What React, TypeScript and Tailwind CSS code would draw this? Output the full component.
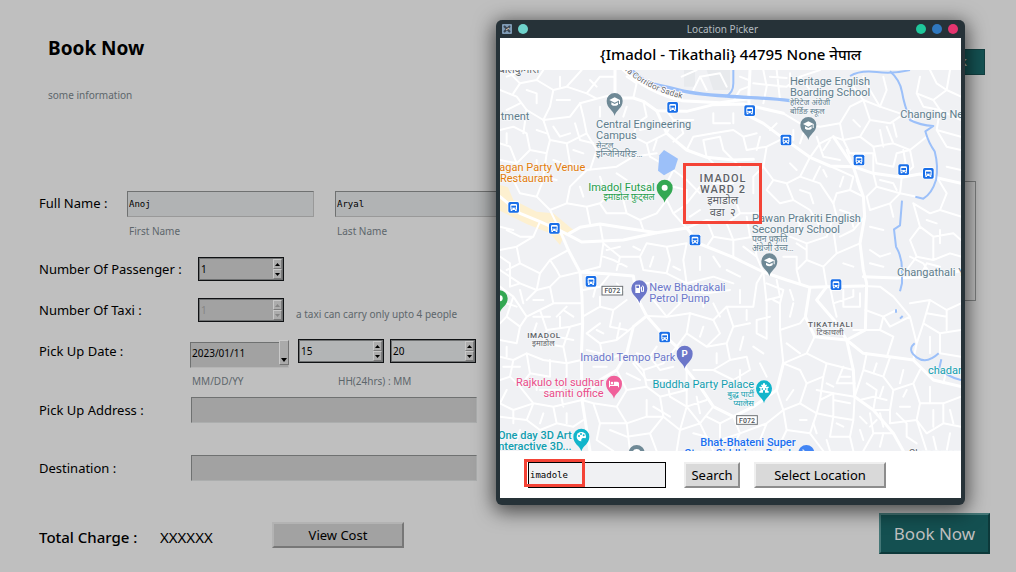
import React from "react";

const SANS = "font-['Noto_Sans','Noto_Sans_Devanagari',sans-serif]";
const MONO = "font-['DejaVu_Sans_Mono',monospace]";

const MAJOR_ROADS = [
  "M345 0V72L355 84H400L430 94L470 122L560 124L640 104L730 102L850 130",
  "M370 0Q440 66 545 92L660 98L760 84",
  "M750 0L746 84L750 140L790 160L850 205L930 262L990 288L1060 290L1120 310L1205 322L1260 312L1383 340",
  "M0 380L60 430L120 455L180 482L215 500L245 516L370 510L470 488L560 474L600 522L700 562L790 606L860 630L930 652L980 650L1090 648",
  "M180 482L205 540L240 606L246 680L248 760L244 860L246 990L270 1143",
  "M208 490L240 472L300 462L400 478L470 488",
  "M240 606L330 612L400 618L410 680L440 738L480 784L530 830L560 900L600 950L640 1010L700 1040L760 1010L830 960L850 880",
  "M440 738L400 770L380 850L350 900L300 930L246 990",
  "M980 650L950 690L1010 760L1040 810L1090 850L1180 862L1240 870L1300 930L1383 950",
  "M1040 810L1060 900L1064 980L1120 1020L1180 1090L1210 1143",
  "M930 652L916 740L944 800L1040 810",
  "M1094 440L1080 520L1090 600L1100 640L1096 780L1040 810",
  "M1000 200L1060 290L1090 380L1094 440",
  "M1090 620L1190 624L1280 620L1383 602",
  "M470 122L500 190L560 240L620 262L700 270L760 268",
];

const MINOR_ROADS = [
  "M0 60L50 80L80 120L130 150L210 140L240 100L290 86L345 72M20 0L60 40L110 30L160 60L200 50L245 0M110 30L130 0M160 60L150 110L130 150M200 50L260 70L300 20L345 20M260 70L290 86M60 40L40 70",
  "M0 180L40 170L80 190L90 240L140 250L130 320L170 330M80 120L70 190M130 150L150 210L200 220L260 190L250 140L240 100M150 210L140 250M200 220L210 280L260 300L350 290L400 260L470 250M260 190L290 240L270 300",
  "M0 220L30 230L50 280L0 270M50 280L90 240M20 120L60 100M30 150L0 140M110 180L140 190M160 170L180 200L210 190M225 160L240 210L280 220",
  "M400 84L410 40L380 20M430 94L440 140L410 160L400 200L440 220L500 190M440 220L450 260L520 300L560 330M500 190L520 150L500 122M520 150L580 150M560 240L580 200L640 190M620 262L610 210L660 200M520 215L550 190L540 160",
  "M545 20L590 0M580 60L600 20L660 10L680 50M600 20L620 60M700 94L720 60L746 50M720 20L746 30M760 40L860 50L900 20L960 0M790 0L800 50L790 100M830 0L840 90M870 50L870 10M810 20L860 24M900 20L930 60",
  "M640 190L700 180L730 200L770 190M660 200L670 240L700 270M730 200L740 240L800 230L850 205M800 230L790 290L820 330L860 340L900 320L930 262M820 330L800 360L840 400L880 390L930 420L960 470M860 340L880 390M900 320L960 340L1000 400L1010 440",
  "M850 130L900 160L960 170L1020 160L1050 110L1090 90L1140 110L1160 60L1150 20M1020 160L1030 210L1080 200L1110 150L1090 90M1080 200L1120 230L1180 220L1230 240L1280 200M1110 150L1170 160L1200 140M1030 210L1050 250L1120 250L1120 310M930 262L960 220L1000 200L1030 210",
  "M1090 20L1110 60L1140 110L1200 130M1060 50L1090 90M1180 220L1160 170M1120 230L1130 280L1180 290L1190 250L1230 240L1240 290L1205 322M1140 180L1150 230M1060 150L1080 170M970 240L990 210M950 200L970 260L1020 270",
  "M1205 322L1200 370L1170 400L1180 440M1120 310L1130 350L1100 380L1110 420L1170 400M1130 350L1200 370L1250 380M1090 380L1050 360L1010 370L1000 400M1050 360L1060 320L990 288M1060 290L1040 240",
  "M1260 20L1250 70L1300 90L1340 60L1383 80M1250 70L1270 110L1320 120L1383 150M1300 90L1320 120L1310 180L1383 200M1290 0L1310 40L1340 60L1350 0M1230 120L1240 150M1310 180L1340 230L1383 240M1310 320L1340 370L1320 420L1383 440M1340 290L1383 300",
  "M1240 400L1290 430L1320 420M1240 400L1260 470L1300 500L1360 490L1383 510M1260 470L1230 510L1250 560L1300 570L1300 500M1250 560L1220 600M1300 570L1350 550L1383 560M1260 620L1280 580L1320 590M1280 450L1310 460M1320 480L1320 520M1230 560L1270 580L1290 610",
  "M0 320L40 330L60 370L110 380L150 420L180 482M110 380L130 330M150 420L200 400L260 410L300 400L340 360M200 400L210 350L260 300M260 410L270 460M300 400L320 430L380 430L420 450L470 430L500 390M380 430L370 390L420 380L440 340M420 450L430 480",
  "M520 300L500 340M500 390L520 430L560 474M520 430L550 410M560 474L620 450L680 460L720 430L780 430M620 450L640 500L700 510L760 500M680 460L700 510L700 562M740 440L750 500M640 500L620 530M720 430L710 400M790 606L770 560L730 530M760 500L770 560",
  "M0 540L50 530L100 500L120 455M50 530L60 580L120 610L150 570L205 540M0 600L60 640L110 660L150 650L180 620L240 606M60 580L20 600M120 610L110 660M150 570L170 600L180 620M20 480L60 500L100 500M0 470L40 480M0 560L30 580L30 650L60 640M150 650L160 700L246 700",
  "M0 650L40 680L80 740L120 720L160 700M40 680L20 740L60 770L80 740M120 720L140 780L210 770L248 760M140 780L130 820L190 830L210 770M60 770L50 820L0 810M20 740L0 760M80 690L110 660M100 740L150 740M170 740L200 710M190 720L220 740M170 800L220 810M190 830L200 880L244 870",
  "M0 860L40 870L80 850L130 870L200 880M40 870L30 920L0 930M80 850L90 910L150 920L150 870M90 910L60 950L100 1000L160 1010L246 990M30 920L60 950M100 1000L80 1050L0 1040M160 1010L170 1060L220 1070L250 1050M80 1050L120 1080L170 1060M20 960L0 1000L40 1020L100 1000M40 1020L40 1060M120 960L180 960L200 920L200 880M180 960L190 1010",
  "M300 462L310 520L300 590L240 606M310 520L360 560L420 560L440 520L500 530L560 520M360 560L350 600M420 560L430 600L500 610L560 640L640 620L700 640M500 530L510 570L500 610M560 520L550 570L560 640M310 560L340 570L380 590M320 540L360 530M400 530L420 540M460 560L450 590",
  "M330 612L300 650L250 660M380 690L340 720L300 710L248 740M340 720L330 770L380 780M300 710L300 680M300 760L260 790L300 820L350 810L400 770M300 820L310 870L380 850M350 810L360 760M260 840L300 850M430 640L470 640M460 690L500 740L570 730L640 750L680 710L760 710L770 640L790 606",
  "M440 738L500 740L540 700L520 680M570 730L560 790L620 830L680 820L700 770L750 760M560 790L530 830M640 750L660 790L620 830M680 820L690 870L640 900L580 900M700 770L680 710M560 660L620 670L690 660M640 700L660 740M610 680L610 710M690 870L740 860L750 900L700 930L640 900",
  "M790 606L800 700L800 806M800 690L840 680L830 630M800 640L850 660L840 700L820 690M840 700L840 780L900 760L916 740M840 780L850 880M810 740L770 750L770 790L800 806M850 880L920 850L980 880L1060 900M920 850L944 800M980 880L970 920L920 940L900 900L850 880M860 820L900 850",
  "M1090 648L1140 650L1180 680L1230 740L1250 820L1240 870M1096 720L1150 740L1190 720M1150 740L1170 770L1230 740M1230 700L1290 690L1340 720L1383 700M1290 690L1270 760L1320 790L1383 780M1270 760L1250 820M1320 790L1320 850L1383 860M1340 720L1340 780M1280 730L1340 740M1290 800L1290 850",
  "M990 650L1000 700L1060 680L1060 660M1000 700L1010 740M1030 660L1030 710L1080 710L1080 670M980 650L970 590L1010 550L1080 520M970 590L920 570L890 600L900 640M920 570L920 520L980 500L1000 440M920 520L870 500M1010 550L1000 480M1020 500L1060 480L1094 440M850 560L890 560L890 600M890 520L920 540",
  "M1060 780L1140 780L1180 800L1160 862M1140 780L1150 740M1100 850L1090 900L1064 980M1090 900L1150 920L1170 862M1150 920L1180 960L1240 940L1260 900M1180 960L1170 1020L1120 1020M1240 940L1260 1000L1330 1000L1383 980M1260 1000L1250 1050L1170 1060L1170 1020M1250 1050L1280 1143M1330 1000L1330 1060L1383 1070M1330 1060L1280 1090L1250 1050",
  "M1064 980L1000 970L960 990L970 920M1000 970L1000 1040L1060 1050L1064 980M1000 1040L950 1030L960 990M1060 1050L1050 1100L990 1100L1000 1040M920 940L900 1000L950 1030L930 1090L970 1143M900 1000L850 1020L860 1080L930 1090M850 1020L830 960M860 1080L830 1143M1050 1100L1060 1143M1000 990L1050 1000M1110 1030L1120 1090L1090 1143M1120 1090L1180 1090M1140 1030L1150 1070",
  "M1030 890L1010 940L1064 940M1100 940L1130 960L1120 1020M950 960L1000 970M1080 990L1120 980L1160 990M1150 1090L1140 1130M1190 1030L1220 1060L1220 1100L1250 1120M1130 1050L1110 1070M1200 1010L1230 1010M1300 1020L1300 1070M1340 900L1330 940M1290 950L1290 1000",
  "M350 900L380 960L350 1010L280 1000L246 990M380 960L440 950L480 980L560 960L560 900M440 950L430 900L380 850M430 900L490 880L530 830M440 990L440 1040L380 1060L350 1010M480 980L490 1040L440 1040M490 1040L540 1080L600 1060L640 1010M540 1080L530 1143M600 1060L640 1143M380 1060L390 1143M280 1000L300 1060L380 1060M300 1060L290 1110L340 1143",
  "M410 850L450 860L480 900L520 890M400 880L440 930L500 930L560 960M450 860L470 830M380 910L420 930M500 930L510 980L560 1010L620 990M560 960L560 1010L540 1080M560 1010L600 1060M460 1010L510 1040M590 980L600 1030M620 1040L660 1060L700 1040L720 1090L690 1143M660 1060L660 1110L720 1090L800 1060L850 1020M800 1060L780 1110M330 1080L380 1100L450 1090L490 1040M450 1090L470 1143M580 1090L620 1100",
  "M620 260L640 280M700 270L720 290M560 330L600 370M560 400L600 350M790 290L760 320L760 370M570 440L600 420M640 340L700 340M520 350L560 360L560 400M1180 160L1190 200M1210 240L1220 300M1140 330L1180 340L1190 360M1030 320L1020 350M960 290L940 330M900 360L930 370L940 400M870 280L890 300",
  "M20 20L50 10M80 60L110 70L110 100M170 90L210 90M180 20L180 50M270 30L290 50M300 110L300 140M20 190L20 220M110 270L110 310M160 270L190 280M220 240L250 250M380 110L370 140M420 180L460 170M470 210L460 240M300 320L310 350M350 310L380 330M240 350L250 380",
  "M640 130L640 160L690 160M700 130L700 160M780 200L770 240M830 160L810 180M880 180L880 210M900 220L910 190M980 320L970 300M1070 330L1080 360M870 440L900 460L890 490M1020 420L1050 430L1060 470M1110 470L1150 480M1110 540L1140 560L1170 550M1110 580L1150 590M1030 580L1060 590",
  "M20 700L50 710M60 660L70 700M100 690L130 690M110 760L100 790M180 740L180 770M20 830L20 860M60 890L10 890M110 930L110 960M130 1030L120 1060M200 1030L200 1060M60 1080L50 1110M150 1090L150 1120M290 640L280 680M350 640L370 660M280 890L320 890M290 780L310 790",
  "M600 560L600 600M640 560L660 590M680 600L720 620M720 660L720 700M540 600L520 590M590 640L590 670M480 660L510 650M740 720L740 750M610 770L600 800M730 800L720 840M760 830L790 850M650 850L650 880M720 900L720 950M780 880L800 920M880 700L870 740M870 660L880 690",
  "M880 960L860 990M900 1050L920 1050M940 1060L950 1090M1010 1060L1030 1070M980 1110L990 1143M1020 920L1050 920M980 940L1000 950M1080 1040L1100 1060M1080 1080L1090 1110M1150 950L1140 980M1210 980L1220 960M1210 900L1200 940M1130 880L1120 910M1350 1020L1360 1060M1300 1100L1310 1143M1350 1090L1340 1143",
];

const RIVERS = [
  "M395 0C440 48 480 44 520 56S600 74 680 78C740 84 790 82 870 92",
  "M676 80Q700 70 700 40V0",
  "M1050 18Q1080 0 1130 6T1230 0",
  "M1170 4Q1200 30 1206 66T1230 150Q1260 166 1300 168L1276 184Q1286 220 1304 244Q1316 290 1308 330Q1296 370 1270 386L1246 380",
  "M1206 392L1200 466L1182 478L1188 530Q1206 560 1206 600L1206 640L1200 664M1188 718V728M1208 738L1200 746",
  "M1244 820Q1220 840 1250 862T1316 850M1324 868L1318 894Q1340 920 1383 930",
];

const BUS_STOPS: [number, number][] = [
  [518, 112], [749, 122], [858, 210], [1077, 270], [1211, 299], [1285, 310], [41, 412],
  [163, 475], [585, 510], [273, 634], [494, 801], [1008, 644],
];

type Label = { x: number; y: number; text: string; size: number; color: string; end?: boolean; mid?: boolean; weight?: number; track?: number };

const SLATE = "#5f7d8c";
const TEAL = "#129eaf";
const INDIGO = "#6b76c9";
const GREY = "#5f6368";

const LABELS: Label[] = [
  { x: -4, y: 10, text: "बालकुमारी", size: 32, color: GREY },
  { x: 2, y: 150, text: "tment", size: 33, color: SLATE },
  { x: 288, y: 174, text: "Central Engineering", size: 33, color: SLATE },
  { x: 288, y: 207, text: "Campus", size: 33, color: SLATE },
  { x: 288, y: 235, text: "सेन्ट्रल", size: 24, color: SLATE },
  { x: 288, y: 262, text: "इन्जिनियरिङ…", size: 27, color: SLATE },
  { x: 870, y: 45, text: "Heritage English", size: 33, color: SLATE },
  { x: 870, y: 78, text: "Boarding School", size: 33, color: SLATE },
  { x: 870, y: 106, text: "हेरिटेज अंग्रेजी", size: 24, color: SLATE },
  { x: 870, y: 132, text: "बोर्डिङ स्कूल", size: 24, color: SLATE },
  { x: 1201, y: 143, text: "Changing Ne", size: 33, color: SLATE },
  { x: -2, y: 303, text: "agan Party Venue", size: 33, color: "#e37c0b" },
  { x: 0, y: 335, text: "Restaurant", size: 33, color: "#e37c0b" },
  { x: 464, y: 363, text: "Imadol Futsal", size: 33, color: "#1f9d4a", end: true },
  { x: 464, y: 390, text: "इमाडोल फुट्सल", size: 27, color: "#1f9d4a", end: true },
  { x: 669, y: 336, text: "IMADOL", size: 33, color: GREY, mid: true, weight: 500, track: 3 },
  { x: 669, y: 369, text: "WARD 2", size: 33, color: GREY, mid: true, weight: 500, track: 3 },
  { x: 668, y: 403, text: "इमाडोल", size: 33, color: GREY, mid: true },
  { x: 668, y: 437, text: "वडा\u00a0\u00a0२", size: 33, color: GREY, mid: true },
  { x: 756, y: 455, text: "Pawan Prakriti English", size: 33, color: SLATE },
  { x: 756, y: 488, text: "Secondary School", size: 33, color: SLATE },
  { x: 756, y: 516, text: "पवन प्रकृति", size: 26, color: SLATE },
  { x: 756, y: 544, text: "अंग्रेजी उच्च…", size: 26, color: SLATE },
  { x: 1191, y: 619, text: "Changathali Y", size: 33, color: SLATE },
  { x: 448, y: 663, text: "New Bhadrakali", size: 33, color: INDIGO },
  { x: 448, y: 696, text: "Petrol Pump", size: 33, color: INDIGO },
  { x: 526, y: 874, text: "Imadol Tempo Park", size: 33, color: INDIGO, end: true },
  { x: 132, y: 804, text: "IMADOL", size: 24, color: GREY, mid: true, weight: 500, track: 2 },
  { x: 130, y: 829, text: "इमाडोल", size: 24, color: GREY, mid: true },
  { x: 992, y: 770, text: "TIKATHALI", size: 24, color: GREY, mid: true, weight: 500, track: 2 },
  { x: 990, y: 795, text: "टिकाथली", size: 24, color: GREY, mid: true },
  { x: 311, y: 948, text: "Rajkulo tol sudhar", size: 33, color: "#ea4c89", end: true },
  { x: 311, y: 981, text: "samiti office", size: 33, color: "#ea4c89", end: true },
  { x: 762, y: 953, text: "Buddha Party Palace", size: 33, color: TEAL, end: true },
  { x: 762, y: 981, text: "बुद्ध पार्टी", size: 25, color: TEAL, end: true },
  { x: 762, y: 1007, text: "प्यालेस", size: 25, color: TEAL, end: true },
  { x: 1284, y: 912, text: "chadan", size: 33, color: TEAL },
  { x: 215, y: 1108, text: "One day 3D Art", size: 33, color: TEAL, end: true, weight: 500 },
  { x: 215, y: 1141, text: "Interactive 3D...", size: 33, color: TEAL, end: true, weight: 500 },
  { x: 887, y: 1129, text: "Bhat-Bhateni Super", size: 33, color: "#1a6ff0", end: true, weight: 500 },
  { x: 880, y: 1161, text: "Store, Siddhipur Road,", size: 33, color: "#1a6ff0", end: true, weight: 500 },
  { x: 1226, y: 1160, text: "Changunarayan", size: 30, color: GREY },
];

function Pin({ x, y, color, children }: { x: number; y: number; color: string; children?: React.ReactNode }) {
  return (
    <g transform={`translate(${x} ${y})`}>
      <path d="M0 42C-3 24-24 20-24-3A24 24 0 0 1 24-3C24 20 3 24 0 42Z" fill={color} />
      {children}
    </g>
  );
}

function Cap() {
  return (
    <g fill="#fff">
      <path d="M-16-6L0-14L16-6L0 2Z" />
      <path d="M-10 1V8Q0 15 10 8V1L0 6Z" />
      <path d="M13-6H16V6H13Z" />
    </g>
  );
}

function BusStop({ x, y }: { x: number; y: number }) {
  return (
    <g transform={`translate(${x} ${y})`}>
      <rect x="-18" y="-18" width="36" height="36" rx="6" fill="#fff" />
      <rect x="-16" y="-16" width="32" height="32" rx="5" fill="#1a6fe8" />
      <rect x="-10" y="-10" width="20" height="18" rx="4" fill="#fff" />
      <rect x="-7" y="-5" width="14" height="6" fill="#1a6fe8" />
      <circle cx="-5" cy="4.500" r="2" fill="#1a6fe8" />
      <circle cx="5" cy="4.500" r="2" fill="#1a6fe8" />
      <path d="M-9 7H-4V11H-9ZM4 7H9V11H4Z" fill="#fff" />
    </g>
  );
}

function RoadShield({ x, y }: { x: number; y: number }) {
  return (
    <g transform={`translate(${x} ${y})`}>
      <rect x="-31" y="-13" width="62" height="26" fill="#fff" stroke="#6f7377" strokeWidth="3" />
      <text textAnchor="middle" y="8" fontSize="21" fill="#4d5156" fontWeight="500">F072</text>
    </g>
  );
}

function Map() {
  return (
    <svg viewBox="0 0 1383 1143" preserveAspectRatio="xMidYMid slice" className="block w-full font-['Roboto','Noto_Sans_Devanagari',sans-serif]" role="img" aria-label="Map">
      <rect width="1383" height="1143" fill="#f0f1f4" />
      <path d="M552 0H585V50H552ZM620 0H690V60H640Z" fill="#e8eaed" />
      <path d="M0 345L24 352L40 390L110 425L160 430L220 480L196 490L180 525L150 490L80 462L0 422Z" fill="#fdf0d0" />
      <g fill="none" stroke="#fff" strokeLinejoin="round" strokeLinecap="round">
        {MINOR_ROADS.map((d) => <path key={d} d={d} strokeWidth="6" />)}
        {MAJOR_ROADS.map((d) => <path key={d} d={d} strokeWidth="9" />)}
      </g>
      <g fill="none" stroke="#9cc0f9" strokeLinejoin="round">
        {RIVERS.map((d, i) => <path key={d} d={d} strokeWidth={i === 0 ? 10 : 6} />)}
      </g>
      <path d="M492 240L534 266L524 298L492 316L474 302L478 256Z" fill="#9cc0f9" />
      <path id="corridor" d="M364 -8Q440 64 556 88" fill="none" />
      <text fontSize="25" fill={GREY} stroke="#fff" strokeWidth="5" paintOrder="stroke">
        <textPath href="#corridor">ara Corridor Sadak</textPath>
      </text>

      {BUS_STOPS.map(([x, y]) => <BusStop key={`${x}-${y}`} x={x} y={y} />)}
      <RoadShield x={337} y={662} />
      <RoadShield x={741} y={1050} />

      {LABELS.map((l) => (
        <text
          key={`${l.text}-${l.y}`}
          x={l.x}
          y={l.y}
          fontSize={l.size}
          fill={l.color}
          fontWeight={l.weight ?? 400}
          letterSpacing={l.track}
          textAnchor={l.end ? "end" : l.mid ? "middle" : "start"}
          stroke="#f6f8fa"
          strokeWidth="5"
          strokeLinejoin="round"
          paintOrder="stroke"
        >
          {l.text}
        </text>
      ))}

      <Pin x={344} y={96} color="#6f8996"><Cap /></Pin>
      <Pin x={925} y={168} color="#6f8996"><Cap /></Pin>
      <Pin x={808} y={577} color="#6f8996"><Cap /></Pin>
      <Pin x={494} y={356} color="#34a853"><circle cy="-3" r="9" fill="#fff" /></Pin>
      <Pin x={-1} y={688} color="#34a853"><circle cy="-3" r="9" fill="#fff" /></Pin>
      <Pin x={418} y={658} color="#6b76c9">
        <path d="M-12-14H2V11H-12ZM4-8H8V4H11V-6L8-10L10-12L14-7V7H5V0H4Z" fill="#fff" />
        <path d="M-9-11H-1V-4H-9Z" fill="#6b76c9" />
      </Pin>
      <Pin x={554} y={854} color="#6b76c9">
        <text textAnchor="middle" y="8" fontSize="29" fontWeight="700" fill="#fff">P</text>
      </Pin>
      <Pin x={342} y={944} color="#f0609a">
        <path d="M-15-12H-12V0H0V-9H10Q15-9 15-4V8H12V4H-12V8H-15Z" fill="#fff" />
        <circle cx="-6" cy="-5" r="4" fill="#fff" />
      </Pin>
      <Pin x={792} y={958} color="#12b5cb">
        <path d="M-14 10V5H-11V-4H-14V-8H-6V-11H-9V-14H-3V-18H3V-14H9V-11H6V-8H14V-4H11V5H14V10H3V3H-3V10Z" fill="#fff" />
        <path d="M-7-3H-3V1H-7ZM3-3H7V1H3Z" fill="#12b5cb" />
      </Pin>
      <Pin x={244} y={1103} color="#12b5cb">
        <circle cy="-3" r="14" fill="#fff" />
        <g fill="#12b5cb"><circle cx="-7" cy="-5" r="3" /><circle cx="-1" cy="-11" r="3" /><circle cx="7" cy="-7" r="3" /><path d="M0 12Q-2 2 6 1L14 2V12Z" /></g>
      </Pin>
      <Pin x={410} y={1152} color="#6f8996"><circle cy="-3" r="12" fill="#fff" /></Pin>
      <Pin x={919} y={1152} color="#4285f4"><path d="M-12-12H-8L-4 2H9L12-8" fill="none" stroke="#fff" strokeWidth="3" /></Pin>
    </svg>
  );
}

function TextField({ id, label, value, caption }: { id: string; label: string; value: string; caption: string }) {
  return (
    <div className="flex w-[187px] shrink-0 flex-col">
      <input id={id} aria-label={label} defaultValue={value} className={`h-[26px] w-full border border-b-[#999] border-l-[#6f7171] border-r-[#999] border-t-[#6f7171] bg-[#b1b3b4] px-px text-[9px] text-black outline-none ${MONO}`} />
      <label htmlFor={id} className="mt-1.5 pl-0.5 text-[10px] leading-4 text-[#5d666b]">{caption}</label>
    </div>
  );
}

function SpinBox({ id, value, label, light, disabled }: { id: string; value: string; label?: string; light?: boolean; disabled?: boolean }) {
  const arrow = disabled ? "#858585" : "#000";
  const step = "flex w-full flex-1 items-center justify-center border border-b-[#7c7c7c] border-l-[#c9c9c9] border-r-[#7c7c7c] border-t-[#c9c9c9] bg-[#acacac]";
  return (
    <div className={`flex h-6 w-[86px] shrink-0 border border-[#101214] p-px shadow-[inset_0_0_0_1px_#6f7172] ${light ? "bg-[#b3b5b6]" : "bg-[#a2a2a2]"}`}>
      <input id={id} aria-label={label} defaultValue={value} disabled={disabled} inputMode="numeric" className={`min-w-0 flex-1 bg-transparent pl-px text-[10px] outline-none ${disabled ? "text-[#858585]" : "text-black"}`} />
      <div className="flex w-[9px] flex-col">
        <button type="button" aria-label="Increase" disabled={disabled} className={step}>
          <svg width="5" height="3" viewBox="0 0 5 3"><path d="M0 3L2.500 0L5 3Z" fill={arrow} /></svg>
        </button>
        <button type="button" aria-label="Decrease" disabled={disabled} className={step}>
          <svg width="5" height="3" viewBox="0 0 5 3"><path d="M0 0L2.500 3L5 0Z" fill={arrow} /></svg>
        </button>
      </div>
    </div>
  );
}

const rowLabel = "shrink-0 text-[13px] leading-5 text-black";
const wideField = "h-[26px] w-[286px] border border-b-[#acaeae] border-l-[#6f7171] border-r-[#acaeae] border-t-[#6f7171] bg-[#a2a2a2] px-px outline-none";
const raised = "h-[26px] border-2 border-b-[#8d8d8d] border-l-[#efefef] border-r-[#8d8d8d] border-t-[#efefef] bg-[#d9d9d9] text-[13px] leading-5 text-black";

function LocationPicker() {
  return (
    <section role="dialog" aria-label="Location Picker" className="absolute right-[51px] top-5 w-[469px] rounded-md border-x-4 border-b-[7px] border-[#263238] bg-[#263238] shadow-[0_4px_20px_2px_rgba(0,0,0,0.65)]">
      <header className="flex h-[18px] items-center justify-between px-0.5">
        <div className="flex w-10 items-center gap-1.5">
          <svg width="10" height="10" viewBox="0 0 10 10"><rect width="10" height="10" rx="1" fill="#7f9bb5" /><path d="M2 2L8 8M2 8L8 2" stroke="#3b4652" strokeWidth="2" /><path d="M4 6L7 4" stroke="#e9c9a5" /></svg>
          <span className="size-2.5 rounded-full bg-[#6fd3cc]" />
        </div>
        <h2 className="text-[10px] leading-4 text-[#b4bcc0]">Location Picker</h2>
        <div className="flex w-14 justify-end gap-1.5 pr-px">
          <button type="button" aria-label="Minimize" className="size-2.5 rounded-full bg-[#1fc79b]" />
          <button type="button" aria-label="Maximize" className="size-2.5 rounded-full bg-[#2f78bf]" />
          <button type="button" aria-label="Close" className="size-2.5 rounded-full bg-[#e5356f]" />
        </div>
      </header>
      <p className="h-8 bg-white pt-1 text-center text-[15px] font-medium leading-6 text-black">{"{Imadol - Tikathali} 44795 None नेपाल"}</p>
      <div className="relative">
        <Map />
        <div className="absolute left-[183px] top-[93px] h-[61px] w-[79px] border-3 border-[#f44336]" />
      </div>
      <div className="relative flex h-[47px] items-center bg-white pl-7">
        <input aria-label="Search place" defaultValue="imadole" className={`h-[26px] w-[138px] border border-black bg-[#f0f1f3] px-px text-[9px] text-black outline-none ${MONO}`} />
        <div className="pointer-events-none absolute left-6 top-2 h-7 w-[61px] border-3 border-[#f44336]" />
        <button type="button" className={`${raised} ml-[18px] w-14`}>Search</button>
        <button type="button" className={`${raised} ml-3.5 w-[132px]`}>Select Location</button>
      </div>
    </section>
  );
}

export default function App() {
  return (
    <main className={`relative min-h-screen overflow-hidden bg-[#bfbfbf] ${SANS}`}>
      <header className="flex h-[181px] items-start justify-between pl-12 pr-[31px]">
        <div className="pt-[34px]">
          <h1 className="text-[19px] leading-7 font-bold text-black">Book Now</h1>
          <p className="mt-[25px] text-[10px] leading-4 text-[#5d666b]">some information</p>
        </div>
        <button type="button" className="mt-[49px] h-[26px] w-24 border border-[#123f40] bg-[#145253] pr-[17px] text-right text-[13px] text-[#bfbfbf]">Back</button>
      </header>

      <form>
        <div className="flex items-start">
          <div className="w-[521px] shrink-0 pl-[39px]">
            <div className="flex items-start pt-2.5">
              <label htmlFor="first" className={`${rowLabel} mt-0.5 w-[88px]`}>Full Name :</label>
              <div className="flex gap-[21px]">
                <TextField id="first" label="First Name" value="Anoj" caption="First Name" />
                <TextField id="last" label="Last Name" value="Aryal" caption="Last Name" />
              </div>
            </div>
            <div className="mt-[18px] flex items-center">
              <label htmlFor="passengers" className={`${rowLabel} w-[159px]`}>Number Of Passenger :</label>
              <SpinBox id="passengers" value="1" />
            </div>
            <div className="mt-[17px] flex items-center">
              <label htmlFor="taxis" className={`${rowLabel} w-[159px]`}>Number Of Taxi :</label>
              <SpinBox id="taxis" value="1" disabled />
              <p className="ml-3 mt-2 text-[10px] leading-4 text-[#5d666b]">a taxi can carry only upto 4 people</p>
            </div>
            <div className="mt-[17px] flex items-start">
              <label htmlFor="date" className={`${rowLabel} mt-0.5 w-[151px]`}>Pick Up Date :</label>
              <div>
                <div className="relative h-[26px] w-[99px]">
                  <select id="date" className="h-full w-full appearance-none border border-b-[#b5b5b5] border-l-[#6f7171] border-r-[#b5b5b5] border-t-[#6f7171] bg-[#a2a2a2] pb-0.5 pl-px text-[10px] text-black outline-none">
                    <option>2023/01/11</option>
                  </select>
                  <span className="pointer-events-none absolute bottom-0 right-0 top-px flex w-2.5 items-end justify-center border border-b-[#757575] border-l-[#c9c9c9] border-r-[#757575] border-t-[#c9c9c9] bg-[#aaa] pb-0.5">
                    <svg width="6" height="4" viewBox="0 0 6 4"><path d="M0 0H6L3 4Z" fill="#000" /></svg>
                  </span>
                </div>
                <p className="mt-2 pl-0.5 text-[10px] leading-4 text-[#5d666b]">MM/DD/YY</p>
              </div>
              <div className="ml-[9px]">
                <div className="flex h-[26px] gap-1.5">
                  <SpinBox id="hour" label="Hour" value="15" light />
                  <SpinBox id="minute" label="Minute" value="20" light />
                </div>
                <p className="mt-2 pl-10 text-[10px] leading-4 text-[#5d666b]">HH(24hrs) : MM</p>
              </div>
            </div>
            <div className="mt-2 flex items-center">
              <label htmlFor="pickup" className={`${rowLabel} w-[152px]`}>Pick Up Address :</label>
              <input id="pickup" className={wideField} />
            </div>
            <div className="mt-8 flex items-center">
              <label htmlFor="destination" className={`${rowLabel} w-[152px]`}>Destination :</label>
              <input id="destination" className={wideField} />
            </div>
          </div>
          <div className="mr-10 h-[120px] flex-1 border border-[#7d7f7f]" />
        </div>

        <div className="mt-8 flex items-start pl-[39px] pr-[26px]">
          <span className="mt-3 w-[121px] text-[15px] font-medium leading-6 text-black">Total Charge :</span>
          <output className="mt-3 w-28 text-[15px] leading-6 text-black">XXXXXX</output>
          <button type="button" className="mt-[9px] h-[26px] w-[132px] border-2 border-b-[#777] border-l-[#b3b3b3] border-r-[#777] border-t-[#b3b3b3] bg-[#a2a2a2] text-[13px] leading-5 text-black">View Cost</button>
          <button type="submit" className="ml-auto h-[41px] w-[111px] border-2 border-b-[#0d393a] border-l-[#477] border-r-[#0d393a] border-t-[#477] bg-[#145051] text-[17px] leading-6 text-[#bfbfbf]">Book Now</button>
        </div>
      </form>

      <LocationPicker />
    </main>
  );
}
